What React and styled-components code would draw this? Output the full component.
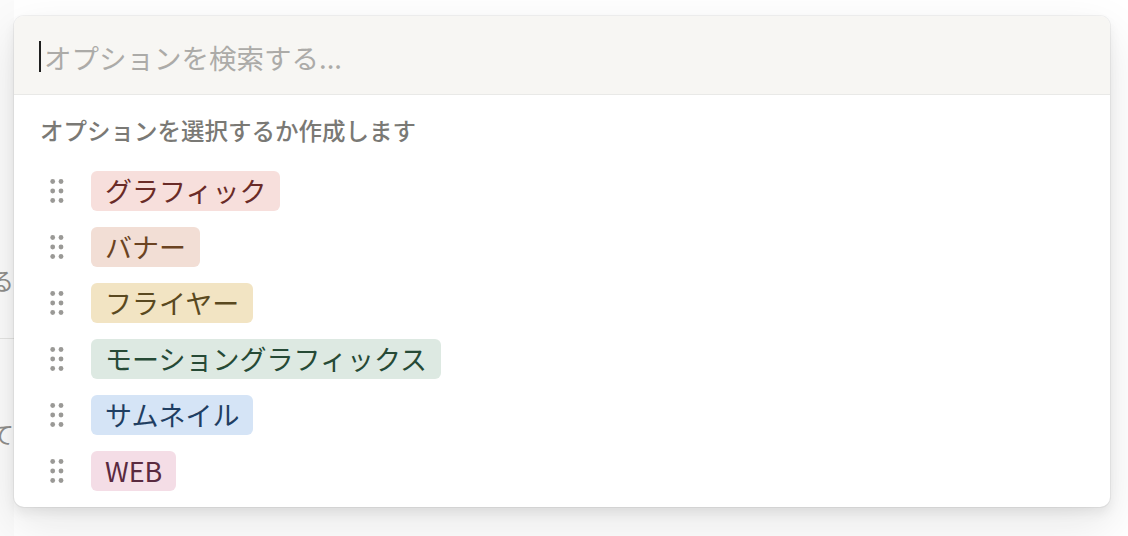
import React from "react";
import styled, { createGlobalStyle } from "styled-components";

const GlobalStyle = createGlobalStyle`
  html, body { margin: 0; padding: 0; background: #ffffff; }
  body { font-family: "Noto Sans CJK JP", "Noto Sans", sans-serif; }
  * { box-sizing: border-box; }
`;

const Stage = styled.div`
  position: relative;
  width: 1128px;
  height: 536px;
  overflow: hidden;
  background: #ffffff;
`;

const BackDoc = styled.div`
  width: 14px;
  height: 100%;
  overflow: hidden;
  display: flex;
  flex-direction: column;
  padding-top: 263px;
  background: #fbfbfb;
`;

const BackLine = styled.div`
  display: flex;
  justify-content: flex-end;
  white-space: nowrap;
  height: 34px;
  font-size: 24px;
  line-height: 34px;
  color: #8f8e8b;
  margin-top: ${(p) => p.$mt || 0}px;
`;

const BackRule = styled.div`
  height: 1px;
  width: 100%;
  background: #e4e4e2;
  margin-top: 41px;
`;

const Panel = styled.div`
  position: absolute;
  left: 14px;
  top: 16px;
  width: 1096px;
  height: 491px;
  background: #ffffff;
  border-radius: 10px;
  overflow: hidden;
  box-shadow: 0 0 0 1px rgba(15, 15, 15, 0.05),
    0 6px 12px rgba(15, 15, 15, 0.07), 0 18px 48px rgba(15, 15, 15, 0.1);
  display: flex;
  flex-direction: column;
`;

const SearchBar = styled.div`
  height: 79px;
  flex-shrink: 0;
  background: #f7f6f3;
  border-bottom: 1px solid #e9e9e7;
  display: flex;
  align-items: center;
  padding-left: 25px;
`;

const Caret = styled.span`
  width: 2px;
  height: 31px;
  background: #1f1f1f;
  margin-right: 3px;
  margin-top: 3px;
`;

const Placeholder = styled.span`
  font-size: 27.5px;
  line-height: 40px;
  color: #acaba8;
  margin-top: 4px;
`;

const Label = styled.div`
  margin-top: 18px;
  padding-left: 26px;
  font-size: 23.5px;
  line-height: 34px;
  font-weight: 500;
  color: #7a7975;
`;

const List = styled.div`
  margin-top: 16px;
  display: flex;
  flex-direction: column;
`;

const Row = styled.div`
  height: 56px;
  display: flex;
  align-items: center;
  padding-left: 34px;
`;

const Handle = styled.svg`
  width: 16px;
  height: 28px;
  margin-right: 27px;
  flex-shrink: 0;
`;

const Tag = styled.span`
  height: 40px;
  line-height: 40px;
  padding: 0 14px;
  border-radius: 6px;
  font-size: 27px;
  white-space: nowrap;
  background: ${(p) => p.$bg};
  color: ${(p) => p.$fg};
`;

const options = [
  { name: "グラフィック", bg: "#f7dfdc", fg: "#6a2b27" },
  { name: "バナー", bg: "#f2ded5", fg: "#6b4322" },
  { name: "フライヤー", bg: "#f2e4c3", fg: "#5a4920" },
  { name: "モーショングラフィックス", bg: "#dde9e2", fg: "#264a36" },
  { name: "サムネイル", bg: "#d5e4f6", fg: "#1f3e62" },
  { name: "WEB", bg: "#f4dde6", fg: "#5a2a40" },
];

function DragDots() {
  const xs = [4.7, 13];
  const ys = [4.5, 14, 23.5];
  return (
    <Handle viewBox="0 0 16 28">
      {ys.map((y) =>
        xs.map((x) => (
          <circle key={`${x}-${y}`} cx={x} cy={y} r="2.4" fill="#9a9996" />
        ))
      )}
    </Handle>
  );
}

export default function App() {
  return (
    <>
      <GlobalStyle />
      <Stage>
        <BackDoc>
          <BackLine>属性を表示する</BackLine>
          <BackRule />
          <BackLine $mt={78}>について</BackLine>
        </BackDoc>
        <Panel>
          <SearchBar>
            <Caret />
            <Placeholder>オプションを検索する...</Placeholder>
          </SearchBar>
          <Label>オプションを選択するか作成します</Label>
          <List>
            {options.map((o) => (
              <Row key={o.name}>
                <DragDots />
                <Tag $bg={o.bg} $fg={o.fg}>
                  {o.name}
                </Tag>
              </Row>
            ))}
          </List>
        </Panel>
      </Stage>
    </>
  );
}
